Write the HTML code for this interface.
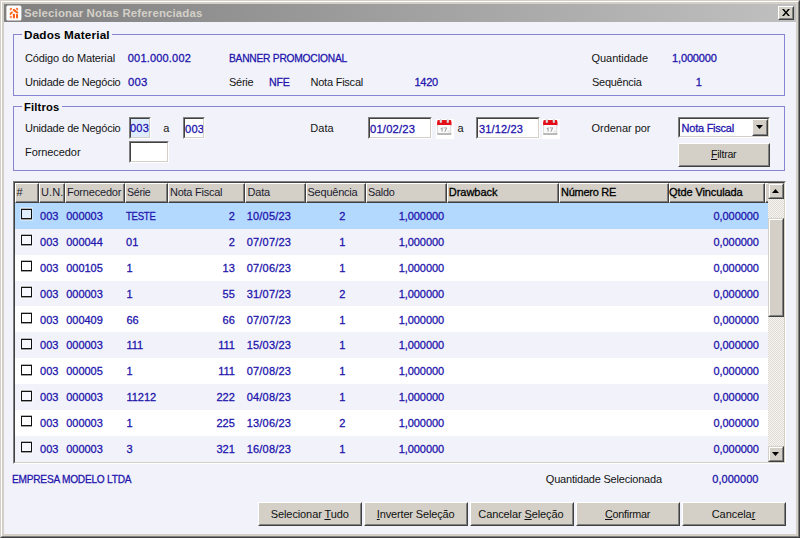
<!DOCTYPE html>
<html><head><meta charset="utf-8">
<style>
html,body{margin:0;padding:0;}
body{width:800px;height:538px;overflow:hidden;background:#d4d0c8;font-family:"Liberation Sans",sans-serif;font-size:11px;color:#101010;position:relative;}
.x{position:absolute;white-space:nowrap;line-height:13px;height:13px;}
.t{color:#141414;}
.v{color:#2214ac;-webkit-text-stroke:0.28px #2214ac;}
.h{color:#1c1c30;}
.hb{color:#000;-webkit-text-stroke:0.3px #000;}
.bt{color:#101010;}
.tt{color:#d4d0c8;font-weight:bold;}
.gl{color:#000;font-weight:bold;}
.glbg{position:absolute;background:#f2f3fa;height:3px;}
u{text-decoration:underline;text-decoration-thickness:1px;text-underline-offset:1px;text-decoration-skip-ink:none;}
.abs{position:absolute;}
#o1{position:absolute;left:0;top:0;width:798px;height:536px;border-right:1px solid #404040;border-bottom:1px solid #404040;border-left:1px solid #d4d0c8;border-top:1px solid #d4d0c8;}
#o2{position:absolute;left:1px;top:1px;width:796px;height:534px;border-right:1px solid #808080;border-bottom:1px solid #808080;border-left:1px solid #fff;border-top:1px solid #fff;}
#title{position:absolute;left:4px;top:4px;width:792px;height:18px;background:linear-gradient(90deg,#808080 0%,#c0c0c0 100%);}
#client{position:absolute;left:4px;top:22px;width:792px;height:512px;background:#f2f3fa;}
.gb{position:absolute;border:1px solid #8785d2;box-sizing:border-box;}
.inp{position:absolute;box-sizing:border-box;background:#fff;border-top:1px solid #808080;border-left:1px solid #808080;border-right:1px solid #fff;border-bottom:1px solid #fff;}
.inp:before{content:"";position:absolute;left:0;top:0;right:0;bottom:0;border-top:1px solid #404040;border-left:1px solid #404040;border-right:1px solid #d4d0c8;border-bottom:1px solid #d4d0c8;}
.btn{position:absolute;box-sizing:border-box;background:#d4d0c8;border-top:1px solid #fff;border-left:1px solid #fff;border-right:1px solid #404040;border-bottom:1px solid #404040;}
.btn:before{content:"";position:absolute;left:0;top:0;right:0;bottom:0;border-right:1px solid #808080;border-bottom:1px solid #808080;border-top:1px solid #d4d0c8;border-left:1px solid #d4d0c8;}
.sbtn{position:absolute;box-sizing:border-box;background:#d4d0c8;border-top:1px solid #d4d0c8;border-left:1px solid #d4d0c8;border-right:1px solid #404040;border-bottom:1px solid #404040;}
.sbtn:before{content:"";position:absolute;left:0;top:0;right:0;bottom:0;border-right:1px solid #808080;border-bottom:1px solid #808080;border-top:1px solid #fff;border-left:1px solid #fff;}
.row{position:absolute;left:15px;width:753px;height:26px;}
.cb{position:absolute;left:21px;width:11px;height:12px;box-sizing:border-box;background:#f8f8fc;border-left:1px solid #101010;border-right:1px solid #101010;box-shadow:0 0 0 1px rgba(255,255,255,0.35);}
.cb:before{content:"";position:absolute;left:-1px;right:-1px;top:0;height:2px;background:linear-gradient(#b4b4b4 0%,#b4b4b4 50%,#141414 50%,#141414 100%);}
.cb:after{content:"";position:absolute;left:-1px;right:-1px;bottom:0;height:2px;background:linear-gradient(#141414 0%,#141414 50%,#a0a0a0 50%,#a0a0a0 100%);}
.hc{position:absolute;top:183px;height:20px;box-sizing:border-box;background:#d4d0c8;border-top:1px solid #fff;border-left:1px solid #fff;border-right:1px solid #404040;border-bottom:1px solid #404040;}
.hc:before{content:"";position:absolute;left:0;top:0;right:0;bottom:0;border-right:1px solid #808080;border-bottom:1px solid #808080;}
.hc[style*="border-right:none"]:before{border-right:none;}
.cal{position:absolute;width:18px;height:20px;background:#fff;}

</style></head><body>
<div id="o1"></div><div id="o2"></div>
<div id="title">
 <svg style="position:absolute;left:2px;top:1px" width="16" height="16" viewBox="6 5 16 16"><rect x="6.4" y="5.4" width="15" height="15.1" rx="1.6" fill="#fff"/>
 <g fill="#ff6018" stroke="none">
 <path d="M9.9 8 L12 7.8 L12.2 9 L10.7 10.5 L9.8 10.3Z" fill="#ff7d40"/>
 <path d="M16 7.8 L18.1 8 L18.2 10.3 L17.2 10.5 L15.8 9Z" fill="#ff7d40"/>
 <path d="M12.9 9.2 L14.2 8.7 L18.2 12.3 L18.2 13.4 L16.7 13.6 L12.8 10.4Z"/>
 <path d="M9.8 13 L12 11.2 L12.9 11.9 L12.7 13 L10.6 15 L9.7 14.7Z"/>
 <rect x="9.9" y="15.8" width="1.9" height="2.4" rx="0.4" fill="#ff8a50"/>
 <rect x="12.9" y="13.8" width="2.1" height="4.4" rx="0.5"/>
 <rect x="16" y="14.1" width="2.0" height="4.1" rx="0.5"/>
 </g></svg>
 <div class="btn" style="left:774px;top:2px;width:16px;height:14px;"><svg style="position:absolute;left:3px;top:2px" width="8" height="7" viewBox="0 0 8 7"><path d="M0 0h2l2 2.5L6 0h2L5 3.5 8 7H6L4 4.5 2 7H0l3-3.5z" fill="#000"/></svg></div>
</div>
<div id="client"></div>

<div class="gb" style="left:13px;top:34px;width:772px;height:62px;"></div>
<div class="glbg" style="left:22px;top:33px;width:90px;"></div>
<div class="gb" style="left:13px;top:106px;width:772px;height:65px;"></div>
<div class="glbg" style="left:22px;top:105px;width:40px;"></div>

<div class="inp" style="left:129px;top:117px;width:22px;height:22px;background:#e0edff"></div>
<div class="inp" style="left:183px;top:117px;width:22px;height:22px;"></div>
<div class="inp" style="left:129px;top:141px;width:40px;height:22px;"></div>
<div class="inp" style="left:368px;top:117px;width:64px;height:22px;"></div>
<div class="inp" style="left:476px;top:117px;width:64px;height:22px;"></div>
<div class="cal" style="left:436px;top:119px;"><svg style="position:absolute;left:0.8px;top:0.3px" width="15" height="17" viewBox="0 0 15 17">
<rect x="0.3" y="1" width="14" height="6" rx="1" fill="#e8141c"/>
<rect x="0.3" y="3" width="14" height="3.2" fill="#e30e18"/>
<rect x="0.6" y="6" width="13.4" height="8.6" fill="#fbfbfb"/>
<rect x="0.3" y="6" width="0.8" height="9" fill="#cfcfcf"/>
<rect x="13.4" y="6" width="0.8" height="9" fill="#cfcfcf"/>
<rect x="0.3" y="14.2" width="14" height="1.6" fill="#a9a9a9"/>
<rect x="2.7" y="0.3" width="2.2" height="3.6" rx="1" fill="#c9c4c4"/>
<rect x="3.2" y="0.8" width="1.2" height="2.8" rx="0.6" fill="#e8e0e0"/>
<rect x="9.7" y="0.3" width="2.2" height="3.6" rx="1" fill="#c9c4c4"/>
<rect x="10.2" y="0.8" width="1.2" height="2.8" rx="0.6" fill="#e8e0e0"/>
<path d="M3.6 9.4 L4.9 8.4 L5.6 8.4 L5.6 12.8 L4.6 12.8 L4.6 9.8 L3.6 10.4Z M6.6 8.4 L10 8.4 L10 9.2 L8.4 12.8 L7.3 12.8 L8.9 9.3 L6.6 9.3Z" fill="#9a9a9a"/>
<circle cx="11.6" cy="12.6" r="1.2" fill="#e4e4e4"/>
</svg></div>
<div class="cal" style="left:542px;top:119px;"><svg style="position:absolute;left:0.8px;top:0.3px" width="15" height="17" viewBox="0 0 15 17">
<rect x="0.3" y="1" width="14" height="6" rx="1" fill="#e8141c"/>
<rect x="0.3" y="3" width="14" height="3.2" fill="#e30e18"/>
<rect x="0.6" y="6" width="13.4" height="8.6" fill="#fbfbfb"/>
<rect x="0.3" y="6" width="0.8" height="9" fill="#cfcfcf"/>
<rect x="13.4" y="6" width="0.8" height="9" fill="#cfcfcf"/>
<rect x="0.3" y="14.2" width="14" height="1.6" fill="#a9a9a9"/>
<rect x="2.7" y="0.3" width="2.2" height="3.6" rx="1" fill="#c9c4c4"/>
<rect x="3.2" y="0.8" width="1.2" height="2.8" rx="0.6" fill="#e8e0e0"/>
<rect x="9.7" y="0.3" width="2.2" height="3.6" rx="1" fill="#c9c4c4"/>
<rect x="10.2" y="0.8" width="1.2" height="2.8" rx="0.6" fill="#e8e0e0"/>
<path d="M3.6 9.4 L4.9 8.4 L5.6 8.4 L5.6 12.8 L4.6 12.8 L4.6 9.8 L3.6 10.4Z M6.6 8.4 L10 8.4 L10 9.2 L8.4 12.8 L7.3 12.8 L8.9 9.3 L6.6 9.3Z" fill="#9a9a9a"/>
<circle cx="11.6" cy="12.6" r="1.2" fill="#e4e4e4"/>
</svg></div>
<div class="inp" style="left:678px;top:117px;width:92px;height:21px;">
 <div class="btn" style="left:73px;top:1px;width:16px;height:17px;"><svg style="position:absolute;left:3px;top:5px" width="7" height="4" viewBox="0 0 7 4"><path d="M0 0h7L3.5 4z" fill="#000"/></svg></div>
</div>
<div class="btn" style="left:678px;top:143px;width:92px;height:24px;"></div>

<!-- grid -->
<div class="abs" style="left:13px;top:181px;width:773px;height:283px;box-sizing:border-box;background:#fff;border-top:1px solid #808080;border-left:1px solid #808080;border-right:1px solid #fff;border-bottom:1px solid #fff;"></div>
<div class="abs" style="left:14px;top:182px;width:771px;height:281px;box-sizing:border-box;border-top:1px solid #404040;border-left:1px solid #404040;border-right:1px solid #d4d0c8;border-bottom:1px solid #d4d0c8;"></div>
<div class="hc" style="left:15px;width:24px"></div>
<div class="hc" style="left:39px;width:26px"></div>
<div class="hc" style="left:65px;width:60px"></div>
<div class="hc" style="left:125px;width:43px"></div>
<div class="hc" style="left:168px;width:77px"></div>
<div class="hc" style="left:245px;width:61px"></div>
<div class="hc" style="left:306px;width:60px"></div>
<div class="hc" style="left:366px;width:81px"></div>
<div class="hc" style="left:447px;width:112px"></div>
<div class="hc" style="left:559px;width:110px"></div>
<div class="hc" style="left:669px;width:96px"></div>
<div class="hc" style="left:765px;width:3px;border-right:none"></div>
<div class="row" style="top:203px;height:26px;background:#b4d9ff"></div>
<div class="cb" style="top:208px;background:#e2efff"></div>
<div class="row" style="top:229px;height:26px;background:#f2f3fa"></div>
<div class="cb" style="top:234px;background:#f7f8fd"></div>
<div class="row" style="top:255px;height:26px;background:#ffffff"></div>
<div class="cb" style="top:260px;background:#ffffff"></div>
<div class="row" style="top:281px;height:25px;background:#f2f3fa"></div>
<div class="cb" style="top:286px;background:#f7f8fd"></div>
<div class="row" style="top:306px;height:26px;background:#ffffff"></div>
<div class="cb" style="top:312px;background:#ffffff"></div>
<div class="row" style="top:332px;height:26px;background:#f2f3fa"></div>
<div class="cb" style="top:338px;background:#f7f8fd"></div>
<div class="row" style="top:358px;height:26px;background:#ffffff"></div>
<div class="cb" style="top:364px;background:#ffffff"></div>
<div class="row" style="top:384px;height:26px;background:#f2f3fa"></div>
<div class="cb" style="top:390px;background:#f7f8fd"></div>
<div class="row" style="top:410px;height:26px;background:#ffffff"></div>
<div class="cb" style="top:415px;background:#ffffff"></div>
<div class="row" style="top:436px;height:26px;background:#f2f3fa"></div>
<div class="cb" style="top:441px;background:#f7f8fd"></div>
<div class="x v" style="left:40.10px;top:210px;letter-spacing:-0.05px;">003</div>
<div class="x v" style="left:66.30px;top:210px;letter-spacing:-0.05px;">000003</div>
<div class="x v" style="left:126.10px;top:210px;letter-spacing:-0.25px;transform:scaleX(0.865);transform-origin:0 0;">TESTE</div>
<div class="x v" style="right:565.30px;top:210px;letter-spacing:-0.05px;">2</div>
<div class="x v" style="left:246.70px;top:210px;letter-spacing:0.2px;">10/05/23</div>
<div class="x v" style="left:322.30px;width:40px;text-align:center;top:210px;letter-spacing:-0.05px;">2</div>
<div class="x v" style="right:355.90px;top:210px;letter-spacing:-0.05px;">1,000000</div>
<div class="x v" style="right:41.10px;top:210px;letter-spacing:-0.05px;">0,000000</div>
<div class="x v" style="left:40.10px;top:236px;letter-spacing:-0.05px;">003</div>
<div class="x v" style="left:66.30px;top:236px;letter-spacing:-0.05px;">000044</div>
<div class="x v" style="left:126.10px;top:236px;letter-spacing:-0.05px;">01</div>
<div class="x v" style="right:565.30px;top:236px;letter-spacing:-0.05px;">2</div>
<div class="x v" style="left:246.70px;top:236px;letter-spacing:0.2px;">07/07/23</div>
<div class="x v" style="left:322.30px;width:40px;text-align:center;top:236px;letter-spacing:-0.05px;">1</div>
<div class="x v" style="right:355.90px;top:236px;letter-spacing:-0.05px;">1,000000</div>
<div class="x v" style="right:41.10px;top:236px;letter-spacing:-0.05px;">0,000000</div>
<div class="x v" style="left:40.10px;top:262px;letter-spacing:-0.05px;">003</div>
<div class="x v" style="left:66.30px;top:262px;letter-spacing:-0.05px;">000105</div>
<div class="x v" style="left:126.50px;top:262px;letter-spacing:-0.05px;">1</div>
<div class="x v" style="right:565.30px;top:262px;letter-spacing:-0.05px;">13</div>
<div class="x v" style="left:246.70px;top:262px;letter-spacing:0.2px;">07/06/23</div>
<div class="x v" style="left:322.30px;width:40px;text-align:center;top:262px;letter-spacing:-0.05px;">1</div>
<div class="x v" style="right:355.90px;top:262px;letter-spacing:-0.05px;">1,000000</div>
<div class="x v" style="right:41.10px;top:262px;letter-spacing:-0.05px;">0,000000</div>
<div class="x v" style="left:40.10px;top:288px;letter-spacing:-0.05px;">003</div>
<div class="x v" style="left:66.30px;top:288px;letter-spacing:-0.05px;">000003</div>
<div class="x v" style="left:126.50px;top:288px;letter-spacing:-0.05px;">1</div>
<div class="x v" style="right:565.30px;top:288px;letter-spacing:-0.05px;">55</div>
<div class="x v" style="left:246.70px;top:288px;letter-spacing:0.2px;">31/07/23</div>
<div class="x v" style="left:322.30px;width:40px;text-align:center;top:288px;letter-spacing:-0.05px;">2</div>
<div class="x v" style="right:355.90px;top:288px;letter-spacing:-0.05px;">1,000000</div>
<div class="x v" style="right:41.10px;top:288px;letter-spacing:-0.05px;">0,000000</div>
<div class="x v" style="left:40.10px;top:314px;letter-spacing:-0.05px;">003</div>
<div class="x v" style="left:66.30px;top:314px;letter-spacing:-0.05px;">000409</div>
<div class="x v" style="left:126.50px;top:314px;letter-spacing:-0.05px;">66</div>
<div class="x v" style="right:565.30px;top:314px;letter-spacing:-0.05px;">66</div>
<div class="x v" style="left:246.70px;top:314px;letter-spacing:0.2px;">07/07/23</div>
<div class="x v" style="left:322.30px;width:40px;text-align:center;top:314px;letter-spacing:-0.05px;">1</div>
<div class="x v" style="right:355.90px;top:314px;letter-spacing:-0.05px;">1,000000</div>
<div class="x v" style="right:41.10px;top:314px;letter-spacing:-0.05px;">0,000000</div>
<div class="x v" style="left:40.10px;top:339px;letter-spacing:-0.05px;">003</div>
<div class="x v" style="left:66.30px;top:339px;letter-spacing:-0.05px;">000003</div>
<div class="x v" style="left:126.50px;top:339px;letter-spacing:-0.05px;">111</div>
<div class="x v" style="right:565.30px;top:339px;letter-spacing:-0.05px;">111</div>
<div class="x v" style="left:246.70px;top:339px;letter-spacing:0.2px;">15/03/23</div>
<div class="x v" style="left:322.30px;width:40px;text-align:center;top:339px;letter-spacing:-0.05px;">1</div>
<div class="x v" style="right:355.90px;top:339px;letter-spacing:-0.05px;">1,000000</div>
<div class="x v" style="right:41.10px;top:339px;letter-spacing:-0.05px;">0,000000</div>
<div class="x v" style="left:40.10px;top:365px;letter-spacing:-0.05px;">003</div>
<div class="x v" style="left:66.30px;top:365px;letter-spacing:-0.05px;">000005</div>
<div class="x v" style="left:126.50px;top:365px;letter-spacing:-0.05px;">1</div>
<div class="x v" style="right:565.30px;top:365px;letter-spacing:-0.05px;">111</div>
<div class="x v" style="left:246.70px;top:365px;letter-spacing:0.2px;">07/08/23</div>
<div class="x v" style="left:322.30px;width:40px;text-align:center;top:365px;letter-spacing:-0.05px;">1</div>
<div class="x v" style="right:355.90px;top:365px;letter-spacing:-0.05px;">1,000000</div>
<div class="x v" style="right:41.10px;top:365px;letter-spacing:-0.05px;">0,000000</div>
<div class="x v" style="left:40.10px;top:391px;letter-spacing:-0.05px;">003</div>
<div class="x v" style="left:66.30px;top:391px;letter-spacing:-0.05px;">000003</div>
<div class="x v" style="left:126.50px;top:391px;letter-spacing:-0.05px;">11212</div>
<div class="x v" style="right:565.30px;top:391px;letter-spacing:-0.05px;">222</div>
<div class="x v" style="left:246.70px;top:391px;letter-spacing:0.2px;">04/08/23</div>
<div class="x v" style="left:322.30px;width:40px;text-align:center;top:391px;letter-spacing:-0.05px;">1</div>
<div class="x v" style="right:355.90px;top:391px;letter-spacing:-0.05px;">1,000000</div>
<div class="x v" style="right:41.10px;top:391px;letter-spacing:-0.05px;">0,000000</div>
<div class="x v" style="left:40.10px;top:417px;letter-spacing:-0.05px;">003</div>
<div class="x v" style="left:66.30px;top:417px;letter-spacing:-0.05px;">000003</div>
<div class="x v" style="left:126.50px;top:417px;letter-spacing:-0.05px;">1</div>
<div class="x v" style="right:565.30px;top:417px;letter-spacing:-0.05px;">225</div>
<div class="x v" style="left:246.70px;top:417px;letter-spacing:0.2px;">13/06/23</div>
<div class="x v" style="left:322.30px;width:40px;text-align:center;top:417px;letter-spacing:-0.05px;">2</div>
<div class="x v" style="right:355.90px;top:417px;letter-spacing:-0.05px;">1,000000</div>
<div class="x v" style="right:41.10px;top:417px;letter-spacing:-0.05px;">0,000000</div>
<div class="x v" style="left:40.10px;top:443px;letter-spacing:-0.05px;">003</div>
<div class="x v" style="left:66.30px;top:443px;letter-spacing:-0.05px;">000003</div>
<div class="x v" style="left:126.50px;top:443px;letter-spacing:-0.05px;">3</div>
<div class="x v" style="right:565.30px;top:443px;letter-spacing:-0.05px;">321</div>
<div class="x v" style="left:246.70px;top:443px;letter-spacing:0.2px;">16/08/23</div>
<div class="x v" style="left:322.30px;width:40px;text-align:center;top:443px;letter-spacing:-0.05px;">1</div>
<div class="x v" style="right:355.90px;top:443px;letter-spacing:-0.05px;">1,000000</div>
<div class="x v" style="right:41.10px;top:443px;letter-spacing:-0.05px;">0,000000</div>
<!-- scrollbar -->
<div class="abs" style="left:768px;top:183px;width:16px;height:279px;background:#e9e8e6;background-image:repeating-conic-gradient(#dfdcd6 0% 25%, #f5f4f1 0% 50%);background-size:2px 2px;"></div>
<div class="sbtn" style="left:768px;top:183px;width:16px;height:16px;"><svg style="position:absolute;left:3px;top:5px" width="7" height="4" viewBox="0 0 7 4"><path d="M0 4h7L3.5 0z" fill="#000"/></svg></div>
<div class="sbtn" style="left:768px;top:218px;width:16px;height:99px;"></div>
<div class="sbtn" style="left:768px;top:446px;width:16px;height:16px;"><svg style="position:absolute;left:3px;top:5px" width="7" height="4" viewBox="0 0 7 4"><path d="M0 0h7L3.5 4z" fill="#000"/></svg></div>

<div class="btn" style="left:258px;top:502px;width:104px;height:24px;"></div>
<div class="btn" style="left:364px;top:502px;width:104px;height:24px;"></div>
<div class="btn" style="left:470px;top:502px;width:104px;height:24px;"></div>
<div class="btn" style="left:576px;top:502px;width:104px;height:24px;"></div>
<div class="btn" style="left:682px;top:502px;width:104px;height:24px;"></div>
<div class="x t" style="left:25.00px;top:52px;letter-spacing:-0.130px;">Código do Material</div>
<div class="x v" style="left:127.80px;top:52px;letter-spacing:0.184px;">001.000.002</div>
<div class="x v" style="left:228.50px;top:52px;letter-spacing:-0.250px;transform:scaleX(0.9297);transform-origin:0 0;">BANNER PROMOCIONAL</div>
<div class="x t" style="left:591.50px;top:52px;letter-spacing:-0.039px;">Quantidade</div>
<div class="x v" style="left:672.00px;top:52px;letter-spacing:-0.136px;">1,000000</div>
<div class="x t" style="left:25.00px;top:76px;letter-spacing:-0.233px;">Unidade de Negócio</div>
<div class="x v" style="left:127.80px;top:76px;letter-spacing:0.200px;transform:scaleX(1.0285);transform-origin:0 0;">003</div>
<div class="x t" style="left:228.50px;top:76px;letter-spacing:-0.250px;transform:scaleX(0.9985);transform-origin:0 0;">Série</div>
<div class="x v" style="left:269.00px;top:76px;letter-spacing:-0.250px;transform:scaleX(0.9647);transform-origin:0 0;">NFE</div>
<div class="x t" style="left:310.50px;top:76px;letter-spacing:-0.230px;">Nota Fiscal</div>
<div class="x v" style="left:414.50px;top:76px;letter-spacing:-0.246px;">1420</div>
<div class="x t" style="left:591.50px;top:76px;letter-spacing:-0.250px;transform:scaleX(0.9950);transform-origin:0 0;">Sequência</div>
<div class="x v" style="left:695.80px;top:76px;letter-spacing:0.000px;">1</div>
<div class="x t" style="left:25.00px;top:122px;letter-spacing:-0.233px;">Unidade de Negócio</div>
<div class="x t" style="left:163.30px;top:122px;letter-spacing:0.000px;">a</div>
<div class="x t" style="left:25.00px;top:146px;letter-spacing:-0.077px;">Fornecedor</div>
<div class="x t" style="left:310.30px;top:122px;letter-spacing:0.037px;">Data</div>
<div class="x t" style="left:457.50px;top:122px;letter-spacing:0.000px;">a</div>
<div class="x t" style="left:591.50px;top:122px;letter-spacing:-0.028px;">Ordenar por</div>
<div class="x v" style="left:12.00px;top:473px;letter-spacing:-0.250px;transform:scaleX(0.9210);transform-origin:0 0;">EMPRESA MODELO LTDA</div>
<div class="x t" style="left:545.80px;top:473px;letter-spacing:-0.204px;">Quantidade Selecionada</div>
<div class="x v" style="left:712.30px;top:473px;letter-spacing:0.039px;">0,000000</div>
<div class="x h" style="left:16.50px;top:186px;letter-spacing:0.000px;">#</div>
<div class="x h" style="left:41.00px;top:186px;letter-spacing:0.075px;">U.N.</div>
<div class="x h" style="left:66.90px;top:186px;letter-spacing:-0.187px;">Fornecedor</div>
<div class="x h" style="left:127.00px;top:186px;letter-spacing:-0.250px;transform:scaleX(0.9616);transform-origin:0 0;">Série</div>
<div class="x h" style="left:170.00px;top:186px;letter-spacing:-0.248px;">Nota Fiscal</div>
<div class="x h" style="left:247.50px;top:186px;letter-spacing:-0.188px;">Data</div>
<div class="x h" style="left:307.50px;top:186px;letter-spacing:-0.222px;">Sequência</div>
<div class="x h" style="left:368.20px;top:186px;letter-spacing:-0.250px;transform:scaleX(0.9855);transform-origin:0 0;">Saldo</div>
<div class="x hb" style="left:448.80px;top:186px;letter-spacing:-0.026px;">Drawback</div>
<div class="x hb" style="left:560.50px;top:186px;letter-spacing:-0.250px;transform:scaleX(0.9960);transform-origin:0 0;">Número RE</div>
<div class="x hb" style="left:669.10px;top:186px;letter-spacing:-0.117px;">Qtde Vinculada</div>
<div class="x bt" style="left:270.80px;top:508px;letter-spacing:-0.108px;">Selecionar <u>T</u>udo</div>
<div class="x bt" style="left:376.80px;top:508px;letter-spacing:-0.151px;"><u>I</u>nverter Seleção</div>
<div class="x bt" style="left:478.30px;top:508px;letter-spacing:-0.103px;">Cancelar <u>S</u>eleção</div>
<div class="x bt" style="left:604.50px;top:508px;letter-spacing:-0.250px;transform:scaleX(0.9816);transform-origin:0 0;"><u>C</u>onfirmar</div>
<div class="x bt" style="left:711.70px;top:508px;letter-spacing:-0.054px;">Cancela<u>r</u></div>
<div class="x bt" style="left:711.00px;top:148px;letter-spacing:-0.250px;transform:scaleX(0.9630);transform-origin:0 0;"><u>F</u>iltrar</div>
<div class="x v" style="left:129.80px;top:122px;letter-spacing:0.200px;transform:scaleX(1.0021);transform-origin:0 0;">003</div>
<div class="x v" style="left:184.50px;top:123px;letter-spacing:0.200px;transform:scaleX(1.0127);transform-origin:0 0;width:18.0px;overflow:hidden;">003</div>
<div class="x v" style="left:370.30px;top:123px;letter-spacing:0.200px;transform:scaleX(1.0174);transform-origin:0 0;">01/02/23</div>
<div class="x v" style="left:479.00px;top:123px;letter-spacing:0.146px;">31/12/23</div>
<div class="x v" style="left:681.60px;top:122px;letter-spacing:-0.248px;">Nota Fiscal</div>
<div class="x tt" style="left:23.50px;top:7px;letter-spacing:0.150px;transform:scaleX(1.0376);transform-origin:0 0;">Selecionar Notas Referenciadas</div>
<div class="x gl" style="left:23.70px;top:29px;letter-spacing:0.150px;transform:scaleX(1.0678);transform-origin:0 0;">Dados Material</div>
<div class="x gl" style="left:23.70px;top:101px;letter-spacing:0.150px;transform:scaleX(1.0180);transform-origin:0 0;">Filtros</div>
</body></html>
